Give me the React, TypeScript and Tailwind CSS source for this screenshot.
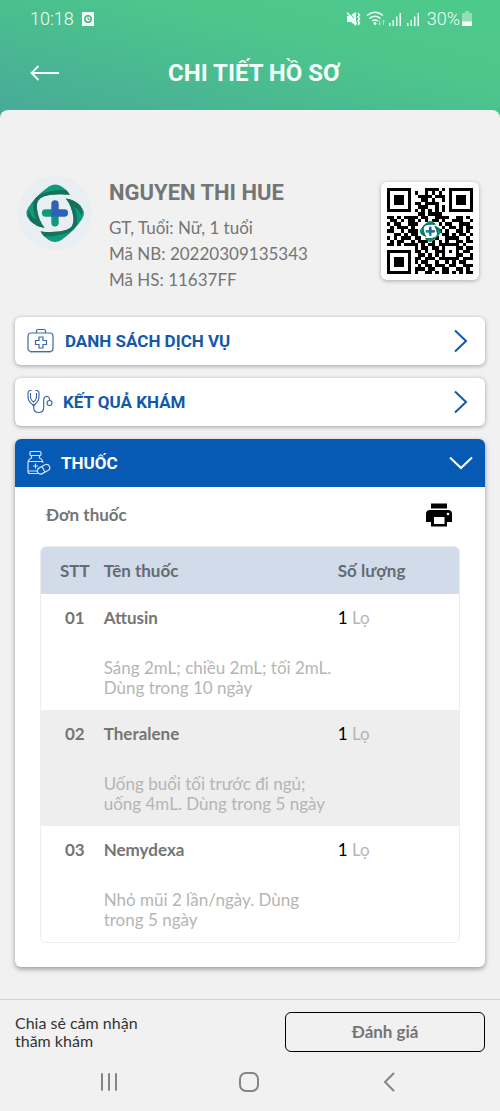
import React from "react";

const QR_ROWS = [
  "1111111000011110101111111",
  "1000001010010101001000001",
  "1011101001111011101011101",
  "1011101000110100101011101",
  "1011101011011110001011101",
  "1000001001110010101000001",
  "1111111010101010101111111",
  "0000000001101111000000000",
  "1101011110110011110011010",
  "0110101101010110100111001",
  "1011001110000001011001110",
  "0101110100000000101101011",
  "1100101110000001010011010",
  "0011010110000000110101101",
  "1010111011000010011110010",
  "0101100101110101010011011",
  "1101011110101101111110100",
  "0000000010110110100011011",
  "1111111011010011101010110",
  "1000001001101010100011001",
  "1011101011011101111110111",
  "1011101010110010010101100",
  "1011101001011011101100111",
  "1000001011101100110011010",
  "1111111010011010110101011",
];

const DRUGS = [
  { no: "01", name: "Attusin", note: "Sáng 2mL; chiều 2mL; tối 2mL.\nDùng trong 10 ngày" },
  { no: "02", name: "Theralene", note: "Uống buổi tối trước đi ngủ;\nuống 4mL. Dùng trong 5 ngày" },
  { no: "03", name: "Nemydexa", note: "Nhỏ mũi 2 lần/ngày. Dùng\ntrong 5 ngày" },
];

function LogoLeaf() {
  return (
    <>
      <path
        fill="#109a7d"
        d="M133 201 Q108 198 90 180 L84 172 Q74 157 84 142 Q104 108 146 78 Q165 66 184 78 Q200 88 208 103 Q160 98 130 108 Q108 116 110 142 Q114 178 133 201Z"
      />
      <path fill="#17705c" d="M208 103 Q204 94 196 88 Q158 88 124 100 Q104 110 98 128 L86 148 Q80 160 90 180 Q108 198 133 201 Q114 178 110 142 Q108 116 130 108 Q160 98 208 103Z" />
      <path fill="#109a7d" d="M84 142 L99 126 Q98 154 108 176 Q90 168 84 142Z" />
    </>
  );
}

function LogoMark() {
  return (
    <>
      <LogoLeaf />
      <g transform="rotate(180 164.500 157.500)">
        <LogoLeaf />
      </g>
      <path fill="#109a7d" d="M164 146 H136 A11 11 0 0 0 136 168 H153 V186 A11 11 0 0 0 175 186 V168 L164 157Z" />
      <path fill="#2f61b4" d="M153 130 A11 11 0 0 1 175 130 V146 H192 A11 11 0 0 1 192 168 H153Z" />
    </>
  );
}

function QrCode() {
  const path = QR_ROWS.map((row, y) =>
    row
      .split("")
      .map((cell, x) => (cell === "1" ? `M${x} ${y}h1v1h-1z` : ""))
      .join(""),
  ).join("");
  return (
    <svg viewBox="0 0 25 25" className="size-[86px]" role="img" aria-label="QR">
      <path d={path} shapeRendering="crispEdges" />
      <svg x="9.500" y="9.500" width="6.200" height="6.200" viewBox="78 71 173 173">
        <circle cx="164" cy="157" r="64" fill="#fff" />
        <LogoMark />
      </svg>
    </svg>
  );
}

function StatusIcons() {
  return (
    <svg viewBox="0 0 77 18" className="h-[18px] w-[77px]" fill="#eefff7" aria-hidden="true">
      <path d="M4 5.500 L10 2 V16 L5 12 H1 V6z" />
      <path d="M1 2.500 L11 14" stroke="#eefff7" strokeWidth="1.300" />
      <path d="M2.500 2 L8 8" stroke="#4dc68b" strokeWidth="1" />
      <path d="M12 3l1.500 2-1.500 2 1.500 2-1.500 2 1.500 2-1.500 2" stroke="#eefff7" strokeWidth="1.500" fill="none" />
      <g fill="none" stroke="#eefff7" strokeWidth="1.500">
        <path d="M21 5.500 Q29 -1 37 5.500" />
        <path d="M23.500 8.500 Q29 4 34.500 8.500" />
        <path d="M26 11 Q29 9 32 11" />
      </g>
      <circle cx="29" cy="13.500" r="1.400" />
      <path d="M33.500 10v5m-1.500-1.500l1.500 1.500 1.500-1.500M37.500 15v-5m-1.500 1.500l1.500-1.500 1.500 1.500" fill="none" stroke="#a5e4c6" />
      <path d="M43 13h1.500v3H43zM46.500 10H48v6h-1.500zM50 6.500h1.500V16H50zM53.500 3H55v13h-1.500zM61 13h1.500v3H61zM64.500 10H66v6h-1.500zM68 6.500h1.500V16H68zM71.500 3H73v13h-1.500z" />
    </svg>
  );
}

function KitIcon() {
  return (
    <svg viewBox="0 0 28 26" className="h-[26px] w-7" fill="none" stroke="#3f6ba8" strokeWidth="1.200" aria-hidden="true">
      <rect x="1" y="5" width="25" height="18.500" rx="3" />
      <path d="M9.500 5V3q0-1.500 1.500-1.500h6q1.500 0 1.500 1.500v2M12 9h4v3.500h3.500v4H16V20h-4v-3.500H8.500v-4H12z" />
      <path d="M3 24.500h21" opacity=".4" />
    </svg>
  );
}

function StethoscopeIcon() {
  return (
    <svg viewBox="0 0 26 26" className="size-[26px]" fill="none" stroke="#315f9f" strokeWidth="1.100" aria-hidden="true">
      <path d="M4.500 1.500H3Q1 2 1 4v4.500q.5 5 5.500 7.500 5-2.500 5.500-7.500V4q0-2-2-2.500H8.500" />
      <path d="M3.500 4v4.500q.5 3 3 4.500 2.500-1.500 3-4.500V4" />
      <path d="M5 16h3.500M6.700 16v2.500q0 5 5 5t5-5v-7q0-4 3-4t3 4" />
      <circle cx="22.500" cy="14" r="2.500" />
    </svg>
  );
}

function MedicineIcon() {
  return (
    <svg viewBox="0 0 24 26" className="h-[26px] w-6" fill="none" stroke="#cfe3ff" strokeWidth="1.200" aria-hidden="true">
      <rect x="3" y="1.500" width="11" height="4" rx="1" />
      <path d="M4.500 5.500v2.500Q1 9.500 1 13v8.500Q1 23.500 3 23.500h8M12.500 5.500v2.500q3 1 3.500 5M1.500 11.500h14M1.500 21h9M8.500 13.500v5M6 16h5" />
      <rect x="10" y="16" width="13" height="6.500" rx="3.250" transform="rotate(-28 16.500 19)" />
      <path d="M15 16.500l3 5.500" />
    </svg>
  );
}

function PrinterIcon() {
  return (
    <svg viewBox="0 0 26 24" className="h-6 w-[26px]" aria-hidden="true">
      <path d="M5 .5h16v5H5zM4 7h18q4 0 4 4v8h-5v4.500H5V19H0v-8q0-4 4-4z" />
      <path fill="#fff" d="M8 14h10.500v7H8z" />
      <circle cx="22" cy="11" r="1.300" fill="#fff" />
    </svg>
  );
}

function SectionLink({ icon, title }: { icon: React.ReactNode; title: string }) {
  return (
    <button type="button" className="flex h-12 w-full items-center rounded-md bg-white pr-4 pl-3 text-[#1359a9] shadow-[0_1px_4px_rgba(0,0,0,0.35)]">
      {icon}
      <span className="ml-2.5 font-[Roboto] text-[17px] leading-6 font-bold">{title}</span>
      <svg viewBox="0 0 16 24" className="ml-auto h-6 w-4" fill="none" stroke="currentColor" strokeWidth="2" aria-hidden="true">
        <path d="M2 1.500L13 12 2 22.500" />
      </svg>
    </button>
  );
}

export default function App() {
  return (
    <div className="flex min-h-screen flex-col bg-[#f1f1f1] font-[Lato,'Noto_Sans',sans-serif] text-[#757575]">
      <header className="bg-[linear-gradient(14deg,#47a999_0%,#4dc68b_65%,#4ec98b_100%)] pb-2.5 text-[#f4fffa]">
        <div className="flex h-[37px] items-center pr-7 pl-[30px] font-[Roboto] text-lg font-light">
          <span>10:18</span>
          <svg viewBox="0 0 12 14" className="ml-2 h-3.5 w-3" aria-hidden="true">
            <path fill="#f4fffa" d="M0 0h12v14H0z" />
            <circle cx="6" cy="7" r="3.200" fill="none" stroke="#49ae82" strokeWidth="1.500" />
            <path d="M6 5v2.300h2" fill="none" stroke="#49ae82" />
          </svg>
          <div className="ml-auto flex items-center">
            <StatusIcons />
            <span className="ml-1 mr-0.5">30%</span>
            <svg viewBox="0 0 10 15" className="h-[15px] w-2.5" aria-hidden="true">
              <path fill="#94ddb9" d="M3 0h4v2h3v9H0V2h3z" />
              <path fill="#f4fffa" d="M0 10.500h10V15H0z" />
            </svg>
          </div>
        </div>
        <div className="grid h-[73px] grid-cols-[1fr_auto_1fr] items-center px-[30px] pb-0.5">
          <button type="button" aria-label="Quay lại" className="w-[30px]">
            <svg viewBox="0 0 30 16" className="h-4 w-[30px]" fill="none" stroke="currentColor" strokeWidth="1.800" aria-hidden="true">
              <path d="M29 8H1.500M8.500 1L1.500 8l7 7" />
            </svg>
          </button>
          <h1 className="ml-2 font-[Roboto] text-2xl leading-8 font-bold">CHI TIẾT HỒ SƠ</h1>
        </div>
      </header>

      <main className="relative -mt-2.5 flex-1 rounded-t-lg bg-[#f1f1f1] px-[15px] pt-[66px] pb-8">
        <section className="flex h-[141px] items-start">
          <svg viewBox="54 47 220 220" className="ml-[3px] size-[74px] shrink-0" role="img" aria-label="Logo">
            <circle cx="164" cy="157" r="110" fill="#e8eef2" />
            <LogoMark />
          </svg>
          <div className="ml-[17px] text-[17px] leading-[26px]">
            <h2 className="mb-[5px] font-[Roboto] text-[22px] leading-[34px] font-bold">NGUYEN THI HUE</h2>
            <p>GT, Tuổi: Nữ, 1 tuổi</p>
            <p>Mã NB: 20220309135343</p>
            <p>Mã HS: 11637FF</p>
          </div>
          <div className="mt-1.5 mr-1.5 ml-auto shrink-0 rounded-md bg-white p-1.5 shadow-[0_1px_4px_rgba(0,0,0,0.3)]">
            <QrCode />
          </div>
        </section>

        <div className="flex flex-col gap-[13px]">
          <SectionLink icon={<KitIcon />} title="DANH SÁCH DỊCH VỤ" />
          <SectionLink icon={<StethoscopeIcon />} title="KẾT QUẢ KHÁM" />
          <section className="overflow-hidden rounded-md bg-white pb-6 shadow-[0_2px_5px_rgba(0,0,0,0.38)]">
            <button type="button" aria-expanded="true" className="flex h-12 w-full items-center bg-[#075ab4] pr-3 pl-3 text-white">
              <MedicineIcon />
              <span className="ml-2.5 font-[Roboto] text-[17px] leading-6 font-bold">THUỐC</span>
              <svg viewBox="0 0 24 14" className="ml-auto h-3.5 w-6" fill="none" stroke="currentColor" strokeWidth="2" aria-hidden="true">
                <path d="M1 1.500L12 12 23 1.500" />
              </svg>
            </button>
            <div className="flex h-[59px] items-center pr-[33px] pb-1 pl-[31px]">
              <h3 className="text-[17px] font-bold">Đơn thuốc</h3>
              <button type="button" aria-label="In đơn thuốc" className="ml-auto">
                <PrinterIcon />
              </button>
            </div>
            <div className="mx-[25px] overflow-hidden rounded-md border border-[#ececec]">
              <table className="w-full table-fixed border-collapse text-left text-[17px] leading-6">
                <colgroup>
                  <col className="w-[15%]" />
                  <col className="w-[56%]" />
                  <col />
                </colgroup>
                <thead>
                  <tr className="h-[47px] bg-[#d1dbe9] text-[#666b73]">
                    <th className="pl-[19px] font-bold">STT</th>
                    <th className="font-bold">Tên thuốc</th>
                    <th className="font-bold">Số lượng</th>
                  </tr>
                </thead>
                <tbody>
                  {DRUGS.map((drug) => (
                    <tr key={drug.no} className="align-top even:bg-[#eeeeee]">
                      <td className="pt-3 pl-6 font-bold">{drug.no}</td>
                      <td className="pt-3 pb-3">
                        <p className="font-bold">{drug.name}</p>
                        <p className="mt-7 leading-5 whitespace-pre-line text-[#b5b5b5]">{drug.note}</p>
                      </td>
                      <td className="pt-3 text-[#b5b5b5]">
                        <span className="text-black">1</span> Lọ
                      </td>
                    </tr>
                  ))}
                </tbody>
              </table>
            </div>
          </section>
        </div>
      </main>

      <footer className="border-t border-[#d2d2d2] px-[15px] pt-3">
        <div className="flex h-10 items-center justify-between">
          <p className="w-[140px] text-base leading-[18px] text-[#333333]">Chia sẻ cảm nhận thăm khám</p>
          <button type="button" className="h-10 w-[42.500%] rounded-md border border-black text-[17px] font-bold">
            Đánh giá
          </button>
        </div>
        <nav className="flex h-[59px] items-center justify-between pr-[86px] pl-[84px] text-[#858585]">
          <button type="button" aria-label="Ứng dụng gần đây">
            <svg viewBox="0 0 20 20" className="size-5" stroke="currentColor" strokeWidth="2" strokeLinecap="round">
              <path d="M3 2v16M10 2v16M17 2v16" />
            </svg>
          </button>
          <button type="button" aria-label="Trang chính">
            <svg viewBox="0 0 20 20" className="size-5" fill="none" stroke="currentColor" strokeWidth="2">
              <rect x="1" y="1" width="18" height="18" rx="6" />
            </svg>
          </button>
          <button type="button" aria-label="Trở lại">
            <svg viewBox="0 0 20 20" className="size-5" fill="none" stroke="currentColor" strokeWidth="2" strokeLinecap="round">
              <path d="M14.500 1.500L6 10l8.500 8.500" />
            </svg>
          </button>
        </nav>
      </footer>
    </div>
  );
}
